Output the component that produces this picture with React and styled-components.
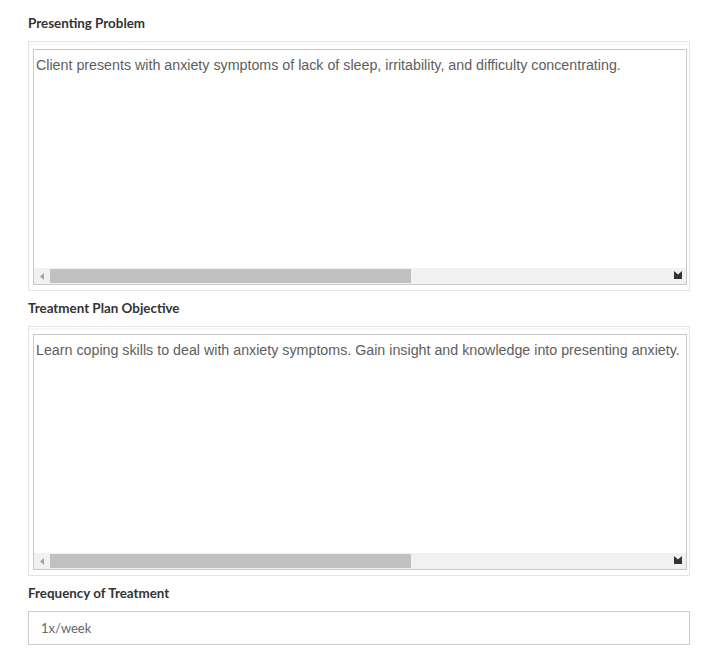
import React from "react";
import styled, { createGlobalStyle } from "styled-components";

const GlobalStyle = createGlobalStyle`
  html, body {
    margin: 0;
    padding: 0;
    background: #ffffff;
  }
`;

const Page = styled.div`
  width: 662px;
  padding: 14px 0 0 28px;
  font-family: Lato, "Open Sans", sans-serif;
`;

const Section = styled.div`
  margin-bottom: 8px;
`;

const Label = styled.label`
  display: block;
  font-family: Lato, sans-serif;
  font-weight: 700;
  font-size: 13.4px;
  line-height: 18px;
  color: #333333;
  margin-bottom: 9px;
`;

const EditorBox = styled.div`
  box-sizing: border-box;
  height: 250px;
  padding: 7px 2px 5px 4px;
  border: 1px solid #e4e4e4;
  background-color: #ffffff;
  background-image: radial-gradient(#ececec 0.6px, transparent 0.8px);
  background-size: 2px 2px;
  background-repeat: repeat-x;
  background-position: 0 1px;
`;

const Frame = styled.div`
  box-sizing: border-box;
  height: 236px;
  border: 1px solid #c9c9c9;
  background: #ffffff;
  display: flex;
  flex-direction: column;
`;

const TextArea = styled.textarea`
  flex: 1;
  border: none;
  outline: none;
  resize: none;
  overflow: hidden;
  white-space: pre;
  margin: 0;
  padding: 7px 2px 5px;
  font-family: "Liberation Sans", Arial, sans-serif;
  font-size: 14.25px;
  line-height: 16px;
  color: #5e5e5e;
  background: transparent;
`;

const ScrollTrack = styled.div`
  height: 16px;
  background: #f1f1f1;
  display: flex;
  align-items: center;
`;

const ArrowCell = styled.div`
  width: 16px;
  height: 16px;
  display: flex;
  align-items: center;
  justify-content: center;
`;

const Thumb = styled.div`
  height: 14px;
  width: ${(p) => p.$width}px;
  background: #c1c1c1;
`;

const Spacer = styled.div`
  flex: 1;
`;

const GripCell = styled.div`
  width: 16px;
  height: 16px;
  display: flex;
  align-items: center;
  justify-content: center;
  padding-bottom: 2px;
  box-sizing: border-box;
`;

const TextInput = styled.input`
  box-sizing: border-box;
  display: block;
  width: 100%;
  height: 34px;
  border: 1px solid #cccccc;
  padding: 0 12px;
  font-family: Lato, sans-serif;
  font-size: 13px;
  color: #666666;
  background: #ffffff;
  outline: none;
`;

const LeftArrow = () => (
  <svg width="4" height="7" viewBox="0 0 4 7">
    <polygon points="4,0 0,3.5 4,7" fill="#a3a3a3" />
  </svg>
);

const Grip = () => (
  <svg width="8" height="8" viewBox="0 0 8 8">
    <polygon points="0,0 4,3.5 8,0 8,8 0,8" fill="#333333" />
  </svg>
);

const Editor = ({ value }) => (
  <EditorBox>
    <Frame>
      <TextArea readOnly value={value} />
      <ScrollTrack>
        <ArrowCell>
          <LeftArrow />
        </ArrowCell>
        <Thumb $width={361} />
        <Spacer />
        <GripCell>
          <Grip />
        </GripCell>
      </ScrollTrack>
    </Frame>
  </EditorBox>
);

const App = () => {
  return (
    <>
      <GlobalStyle />
      <Page>
        <Section>
          <Label>Presenting Problem</Label>
          <Editor value="Client presents with anxiety symptoms of lack of sleep, irritability, and difficulty concentrating." />
        </Section>
        <Section>
          <Label>Treatment Plan Objective</Label>
          <Editor value="Learn coping skills to deal with anxiety symptoms. Gain insight and knowledge into presenting anxiety." />
        </Section>
        <Section>
          <Label>Frequency of Treatment</Label>
          <TextInput readOnly value="1x/week" />
        </Section>
      </Page>
    </>
  );
};

export default App;
